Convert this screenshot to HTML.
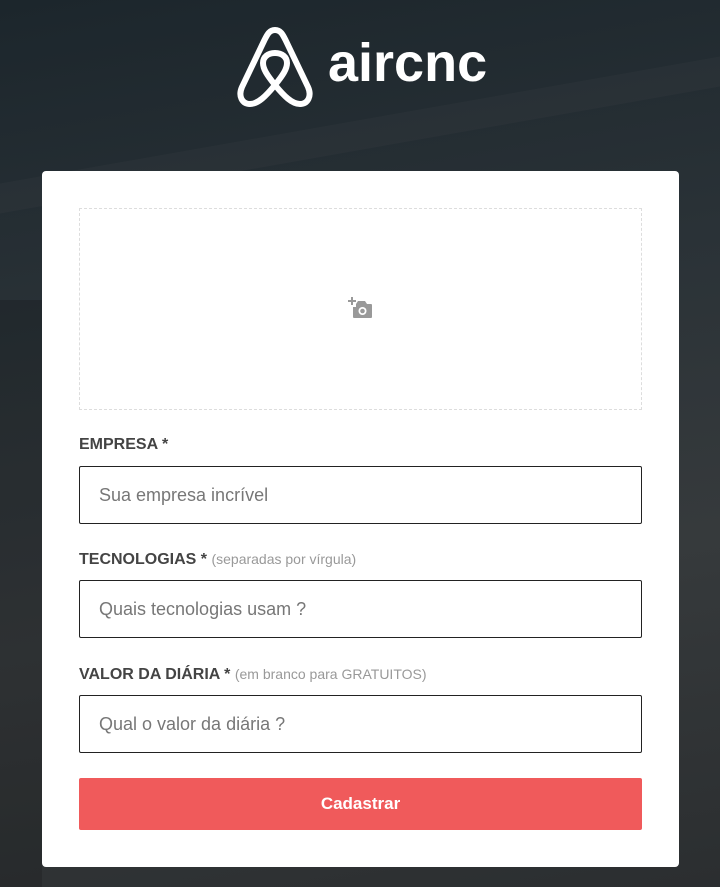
<!DOCTYPE html>
<html><head><meta charset="utf-8"><style>
*{box-sizing:border-box;margin:0;padding:0}
html,body{width:720px;height:887px;overflow:hidden}
body{font-family:"Liberation Sans",sans-serif;background:linear-gradient(170deg,#1c262c 0%,#2a3237 35%,#363a3c 65%,#2b2e30 100%);position:relative}
.stripe{position:absolute;background:rgba(255,255,255,0.025)}
.logo{position:absolute;left:236px;top:27px;display:flex;align-items:center}
.logo span{color:#fff;font-weight:bold;font-size:54px;margin-left:14px;margin-top:-8px}
.card{position:absolute;left:42px;top:171px;width:637px;height:696px;background:#fff;border-radius:4px}
.drop{position:absolute;left:37px;top:37px;width:563px;height:202px;border:1px dashed #ddd}
.cam{position:absolute;left:268px;top:88px}
label{position:absolute;left:37px;font-weight:bold;font-size:16px;color:#444}
label small{font-weight:normal;font-size:14px;color:#999}
.in{position:absolute;left:37px;width:563px;height:58px;border:1px solid #222;border-radius:2px;padding-left:19px;line-height:56px;font-size:18px;color:#777}
.btn{position:absolute;left:37px;top:607px;width:563px;height:52px;background:#f05a5b;border-radius:2px;color:#fff;font-weight:bold;font-size:17px;text-align:center;line-height:52px}
</style></head><body>
<div class="stripe" style="left:0;top:120px;width:720px;height:30px;transform:skewY(-10deg)"></div>
<div class="stripe" style="left:0;top:300px;width:42px;height:587px;background:rgba(0,0,0,0.15)"></div>
<div class="logo">
<svg width="78" height="80" viewBox="0 0 78 80"><path d="M39 3 C33 3 31 8 28 14 L6 60 C2 69 6 77 14 77 C22 77 30 69 39 58 C48 69 56 77 64 77 C72 77 76 69 72 60 L50 14 C47 8 45 3 39 3 Z M39 58 C31 48 27 42 27 36 C27 30 32 26 39 26 C46 26 51 30 51 36 C51 42 47 48 39 58 Z" fill="none" stroke="#fff" stroke-width="6" stroke-linejoin="round"/></svg>
<span>aircnc</span>
</div>
<div class="card">
<div class="drop"><svg class="cam" width="26" height="22" viewBox="0 0 26 22"><path d="M3 0v3H0v2h3v3h2V5h3V3H5V0z" fill="#999"/><path d="M8 7l2-3h7l2 3h4a1 1 0 0 1 1 1v12a1 1 0 0 1-1 1H6a1 1 0 0 1-1-1V10h3z" fill="#999"/><circle cx="14.5" cy="14" r="4" fill="#fff"/><circle cx="14.5" cy="14" r="2.3" fill="#999"/></svg></div>
<label style="top:265px">EMPRESA *</label>
<div class="in" style="top:295px">Sua empresa incrível</div>
<label style="top:380px">TECNOLOGIAS * <small>(separadas por vírgula)</small></label>
<div class="in" style="top:409px">Quais tecnologias usam ?</div>
<label style="top:495px">VALOR DA DIÁRIA * <small>(em branco para GRATUITOS)</small></label>
<div class="in" style="top:524px">Qual o valor da diária ?</div>
<div class="btn">Cadastrar</div>
</div>
</body></html>
